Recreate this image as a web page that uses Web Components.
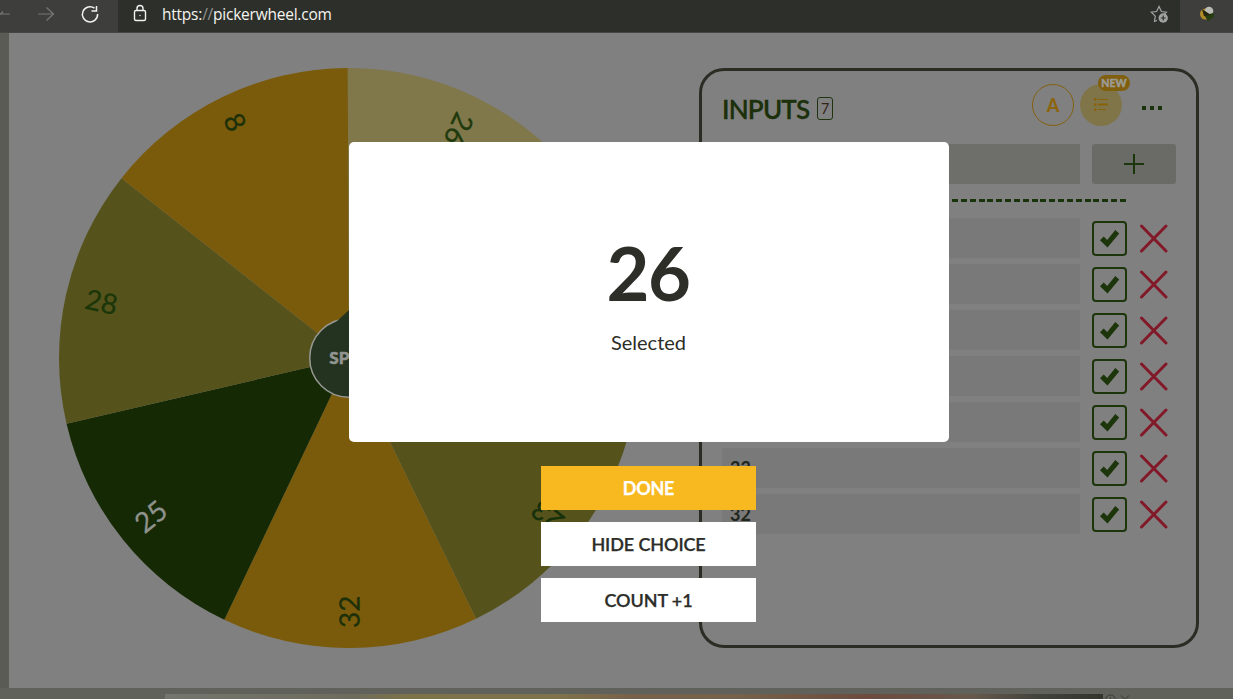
<!DOCTYPE html>
<html lang="en">
<head>
<meta charset="utf-8">
<title>Picker Wheel</title>
<style>
  html, body {
    margin: 0;
    height: 100%;
    overflow: hidden;
  }

  body {
    background-color: #808080;
    font-family: Lato, "Liberation Sans", sans-serif;
    color: #19300a;
  }
</style>
</head>
<body>
<picker-app></picker-app>

<script>
class BrowserBar extends HTMLElement {
  constructor () {
    super()
    this.shadow = this.attachShadow({ mode: 'open' })
    this.render()
  }

  render () {
    this.shadow.innerHTML =
      `
        <style>
            :host{
                display:flex;
                height:33px;
                background-color:#3e3f3d;
                border-bottom:1px solid #454642;
                box-sizing:border-box;
            }

            .nav{
                width:118px;
                flex:none;
            }

            .address{
                flex:1;
                display:flex;
                align-items:center;
                background-color:#2d2f2b;
                padding-left:14px;
                padding-right:10px;
            }

            .url{
                flex:1;
                margin-left:13px;
                margin-top:-4px;
                font-family:"Open Sans", "Noto Sans", sans-serif;
                font-size:15.5px;
                line-height:20px;
                letter-spacing:-0.23px;
                color:#f4f4ee;
            }

            .url span{
                color:#92938e;
            }

            .extension{
                width:53px;
                flex:none;
            }

            svg{
                display:block;
            }
        </style>

        <div class="nav">
            <svg width="118" height="32" fill="none" stroke="#777875" stroke-width="1.2">
                <path d="M0 14h10M38 14h15.500M46.500 7.500l7 6.500l-7 6.500M0 14.500l3 -3"/>
                <path d="M94.500 8.200A7.600 7.600 0 1 0 97.600 14" stroke="#f2f2f0" stroke-width="1.5"/>
                <path d="M96.500 6v5h-5" stroke="#f2f2f0" stroke-width="1.5"/>
            </svg>
        </div>
        <div class="address">
            <svg width="17" height="32" fill="none" stroke="#f2f2f0" stroke-width="1.4">
                <rect x="2.500" y="10.500" width="11" height="10" rx="1.500"/>
                <path d="M5 10.500V8.500a3 3 0 0 1 6 0v2"/>
                <circle cx="8" cy="15.500" r=".7" fill="#f2f2f0" stroke="none"/>
            </svg>
            <div class="url">https:<span>//</span>pickerwheel.com</div>
            <svg width="20" height="32" fill="none" stroke="#a3a4a1" stroke-width="1.2">
                <path d="M7 20.500l-2.500 .8l.8-5.200l-4-3.900l5.300-.7l2.400-5l2.400 5l5 .7l-2 2"/>
                <circle cx="13.200" cy="18" r="4.700" fill="#a3a4a1" stroke="none"/>
                <path d="M10.700 18h5M13.200 15.500v5" stroke="#2d2f2b"/>
            </svg>
        </div>
        <div class="extension">
            <svg width="53" height="32">
                <circle cx="25.500" cy="14" r="5.500" fill="#b08b28"/>
                <circle cx="29" cy="11" r="4.300" fill="#b9bbb5"/>
                <path d="M24 15l10-2v4l-6 4z" fill="#263d12"/>
                <path d="M22 9l9 6l-7 1z" fill="#25240f"/>
            </svg>
        </div>
        `
  };
}

customElements.define('browser-bar', BrowserBar)

class PickerWheel extends HTMLElement {
  constructor () {
    super()
    this.shadow = this.attachShadow({ mode: 'open' })
    this.radius = 290
    this.offset = -0.25
    this.slices = [
      { label: '26', fill: '#80774b', color: '#1f3a0d' },
      { label: '', fill: '#152a04', color: '#888' },
      { label: '23', fill: '#55531b', color: '#16300a' },
      { label: '32', fill: '#7a5b0b', color: '#1c300a' },
      { label: '25', fill: '#152a04', color: '#8f918c' },
      { label: '28', fill: '#55531b', color: '#1b3609' },
      { label: '8', fill: '#7a5b0b', color: '#1c300a' }
    ]
    this.render()
  }

  point (angle) {
    const rad = angle * Math.PI / 180
    const x = this.radius * Math.sin(rad)
    const y = -this.radius * Math.cos(rad)
    return `${x.toFixed(2)} ${y.toFixed(2)}`
  }

  renderSlices () {
    const step = 360 / this.slices.length

    return this.slices.map((slice, i) => {
      const start = this.offset + i * step
      const middle = start + step / 2

      return `
        <path fill="${slice.fill}" d="M0 0L${this.point(start)}A290 290 0 0 1 ${this.point(start + step)}Z"/>
        ${slice.label ? `<text transform="rotate(${middle + 90}) translate(-270 9.300)" fill="${slice.color}" stroke="${slice.color}">${slice.label}</text>` : ''}
      `
    }).join('')
  }

  render () {
    this.shadow.innerHTML =
      `
        <style>
            :host{
                display:block;
                width:580px;
                height:580px;
                flex:none;
            }

            svg{
                display:block;
            }

            text{
                font-size:28px;
                stroke-width:.25;
            }

            .spin{
                font-size:17px;
                font-weight:900;
                text-anchor:middle;
                stroke-width:.5;
            }
        </style>

        <svg width="580" height="580" viewBox="-290 -290 580 580">
            ${this.renderSlices()}
            <circle r="39.300" fill="#24331f" stroke="#989993" stroke-width="1.500"/>
            <path d="M-13 -36L0 -48L13 -36Z" fill="#24331f"/>
            <text class="spin" x="-.5" y="6" fill="#92958f" stroke="#92958f">SPIN</text>
        </svg>
        `
  };
}

customElements.define('picker-wheel', PickerWheel)

class InputRow extends HTMLElement {
  constructor () {
    super()
    this.shadow = this.attachShadow({ mode: 'open' })
    this.render()
  }

  render () {
    this.shadow.innerHTML =
      `
        <style>
            :host{
                display:flex;
                align-items:center;
                height:40px;
            }

            .entry{
                width:358px;
                height:40px;
                box-sizing:border-box;
                padding-left:8px;
                margin-right:12px;
                background-color:#797979;
                color:#20261b;
                font-size:18px;
                font-weight:700;
                line-height:41px;
            }

            .check{
                width:35px;
                height:35px;
                box-sizing:border-box;
                border:2px solid #1d350b;
                border-radius:4px;
                margin-right:12px;
            }

            svg{
                display:block;
            }
        </style>

        <div class="entry"><slot></slot></div>
        <div class="check">
            <svg width="31" height="31">
                <path d="M6 17.200L9.700 13.500L13.200 17L21.300 7L25.200 10.600L13.500 24.500Z" fill="#1d350b"/>
            </svg>
        </div>
        <svg width="30" height="30" stroke="#821929" stroke-width="3" stroke-linecap="round">
            <path d="M2.500 3L27 28M27 3L2.500 28"/>
        </svg>
        `
  };
}

customElements.define('input-row', InputRow)

class InputPanel extends HTMLElement {
  constructor () {
    super()
    this.shadow = this.attachShadow({ mode: 'open' })
    this.render()
  }

  render () {
    this.shadow.innerHTML =
      `
        <style>
            :host{
                display:flex;
                flex-direction:column;
                width:500px;
                height:580px;
                flex:none;
                box-sizing:border-box;
                border:3px solid #2b2d25;
                border-radius:25px;
                padding:0 20px;
            }

            header{
                display:flex;
                align-items:center;
                height:66px;
                margin-bottom:7px;
            }

            h2{
                margin:9px 8px 0 0;
                width:87px;
                white-space:nowrap;
                font-size:26px;
                font-weight:600;
                line-height:30px;
                letter-spacing:-0.8px;
                color:#1b300b;
                -webkit-text-stroke:0.3px #1b300b;
            }

            .count{
                width:16px;
                height:23px;
                margin-top:8px;
                box-sizing:border-box;
                border:1.5px solid #20330f;
                border-radius:3px;
                font-size:15px;
                line-height:21px;
                text-align:center;
                color:#34251c;
            }

            .modes{
                display:flex;
                gap:6px;
                margin-left:auto;
                margin-right:20px;
                margin-top:2px;
            }

            .mode{
                position:relative;
                width:42px;
                height:42px;
                box-sizing:border-box;
                border-radius:50%;
                font-size:18px;
                font-weight:900;
                line-height:41px;
                text-align:center;
                color:#8b6510;
            }

            .mode.text{
                border:1.3px solid #85600f;
            }

            .mode.list{
                background-color:#807449;
            }

            .new{
                position:absolute;
                left:18px;
                top:-9px;
                width:32px;
                height:16px;
                border-radius:8px;
                background-color:#80600e;
                color:#9c9b94;
                font-size:10.500px;
                line-height:16px;
                -webkit-text-stroke:0.4px #9c9b94;
            }

            .dots{
                display:flex;
                gap:4px;
                margin-right:14px;
                margin-top:7px;
            }

            .dots i{
                width:4px;
                height:4px;
                background-color:#19330a;
            }

            .adder{
                display:flex;
                gap:12px;
                height:40px;
            }

            .field{
                width:358px;
                background-color:#6e6e6b;
            }

            .add{
                width:84px;
                border-radius:3px;
                background-color:#6a6a67;
            }

            .divider{
                width:404px;
                height:3px;
                margin:15px 0 16px;
                background:repeating-linear-gradient(90deg, #19330a 0 6px, transparent 6px 8.845px);
            }

            .rows{
                display:flex;
                flex-direction:column;
                gap:6px;
            }

            svg{
                display:block;
            }
        </style>

        <header>
            <h2>INPUTS</h2>
            <div class="count">7</div>
            <div class="modes">
                <div class="mode text">A</div>
                <div class="mode list">
                    <svg width="42" height="42" fill="#8a620a">
                        <path d="M14 14h2.500v2.500H14zM14 19.500h2.500V22H14zM14 24.500h2.500V27H14zM18 15h10v1H18zM18 19.500h10v2H18zM18 25h8v1h-8z"/>
                    </svg>
                    <div class="new">NEW</div>
                </div>
            </div>
            <div class="dots"><i></i><i></i><i></i></div>
        </header>
        <div class="adder">
            <div class="field"></div>
            <div class="add">
                <svg width="84" height="40" stroke="#1c360b" stroke-width="2">
                    <path d="M32 20h20M42 10v20"/>
                </svg>
            </div>
        </div>
        <div class="divider"></div>
        <div class="rows"><slot></slot></div>
        `
  };
}

customElements.define('input-panel', InputPanel)

class ModalButton extends HTMLElement {
  constructor () {
    super()
    this.shadow = this.attachShadow({ mode: 'open' })
    this.render()
  }

  render () {
    this.shadow.innerHTML =
      `
        <style>
            :host{
                display:block;
                width:215px;
                height:44px;
            }

            button{
                width:100%;
                height:100%;
                padding:0;
                border:none;
                background-color:white;
                color:#2c2d29;
                cursor:pointer;
                font-family:inherit;
                font-size:18px;
                font-weight:600;
                letter-spacing:-0.1px;
                -webkit-text-stroke:0.25px currentColor;
            }

            :host([primary]) button{
                background-color:#f8b81f;
                color:white;
                font-weight:700;
                letter-spacing:-0.3px;
            }
        </style>

        <button><slot></slot></button>
        `
  };
}

customElements.define('modal-button', ModalButton)

class ResultModal extends HTMLElement {
  constructor () {
    super()
    this.shadow = this.attachShadow({ mode: 'open' })
    this.render()
  }

  render () {
    this.shadow.innerHTML =
      `
        <style>
            /* lies over the wheel and the panel */
            :host{
                position:absolute;
                z-index:10;
                left:349px;
                top:142px;
                width:600px;
                display:flex;
                flex-direction:column;
                align-items:center;
                gap:24px;
            }

            .result{
                width:100%;
                height:300px;
                box-sizing:border-box;
                padding:86px 1px 0 0;
                border-radius:5px;
                background-color:white;
                color:#2c2e27;
                text-align:center;
            }

            .choice{
                font-size:74px;
                font-weight:700;
                line-height:90px;
                letter-spacing:-1.5px;
                margin-right:1px;
            }

            .caption{
                margin-top:12px;
                font-size:20px;
                line-height:24px;
            }

            .actions{
                display:flex;
                flex-direction:column;
                gap:12px;
                margin-right:1px;
            }
        </style>

        <div class="result">
            <div class="choice"><slot name="choice"></slot></div>
            <div class="caption">Selected</div>
        </div>
        <div class="actions"><slot></slot></div>
        `
  };
}

customElements.define('result-modal', ResultModal)

class PickerApp extends HTMLElement {
  constructor () {
    super()
    this.shadow = this.attachShadow({ mode: 'open' })
    this.render()
  }

  render () {
    this.shadow.innerHTML =
      `
        <style>
            :host{
                position:relative;
                display:flex;
                flex-direction:column;
                height:699px;
                overflow:hidden;
            }

            main{
                display:flex;
                height:655px;
                box-sizing:border-box;
                border-left:9px solid #5a5b55;
                padding:35px 0 0 50px;
                gap:60px;
            }

            footer{
                display:flex;
                height:11px;
                box-sizing:border-box;
                padding:6px 0 0 165px;
                background-color:#60615b;
            }

            .banner{
                width:938px;
                background:linear-gradient(90deg, #74756e 0, #6d6c5d 20%, #7d7348 26%, #7f724c 42%, #77614a 50%, #75644b 60%, #6d4b3f 75%, #67594c 86%, #42433d 93%, #33352d 100%);
            }

            svg{
                display:block;
            }
        </style>

        <browser-bar></browser-bar>
        <main>
            <picker-wheel></picker-wheel>
            <input-panel>
                <input-row></input-row>
                <input-row></input-row>
                <input-row></input-row>
                <input-row></input-row>
                <input-row></input-row>
                <input-row>23</input-row>
                <input-row>32</input-row>
            </input-panel>
        </main>
        <footer>
            <div class="banner"></div>
            <svg width="28" height="5" fill="none" stroke="#393b35">
                <path d="M2.500 6a5 5 0 0 1 10 0M7.500 3.500V5M18 1.500l4 4M26 1.500l-4 4"/>
            </svg>
        </footer>
        <result-modal>
            <span slot="choice">26</span>
            <modal-button primary>DONE</modal-button>
            <modal-button>HIDE CHOICE</modal-button>
            <modal-button>COUNT +1</modal-button>
        </result-modal>
        `
  };
}

customElements.define('picker-app', PickerApp)
</script>
</body>
</html>
